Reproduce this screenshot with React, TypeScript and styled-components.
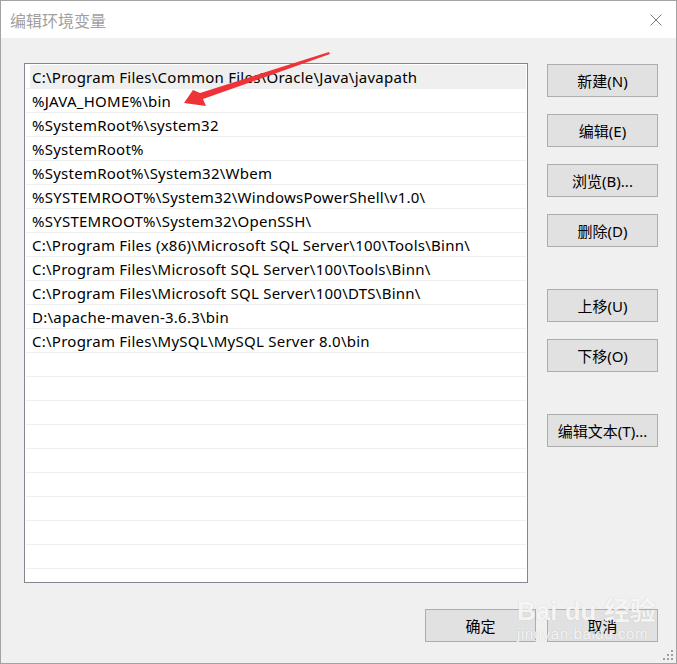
import React from "react";
import styled, { createGlobalStyle } from "styled-components";

const GlobalStyle = createGlobalStyle`
  html, body { margin: 0; padding: 0; background: #ffffff; }
  * { box-sizing: border-box; }
`;

const FONT = `"Noto Sans", "Noto Sans CJK SC", sans-serif`;

const Window = styled.div`
  position: relative;
  width: 677px;
  height: 664px;
  border: 1px solid #a3a3a3;
  display: flex;
  flex-direction: column;
  font-family: ${FONT};
  overflow: hidden;
`;

const TitleBar = styled.div`
  height: 37px;
  background: #ffffff;
  display: flex;
  align-items: center;
  justify-content: space-between;
  padding: 0 14px 0 9px;
`;

const Title = styled.div`
  font-size: 16px;
  color: #a0a0a0;
  line-height: 1;
  padding-top: 2px;
`;

const CloseButton = styled.div`
  width: 12px;
  height: 12px;
  display: flex;
  align-items: center;
  justify-content: center;
`;

const Body = styled.div`
  flex: 1;
  background: #f0f0f0;
  display: flex;
  flex-direction: column;
  padding: 25px 18px 21px 23px;
`;

const Main = styled.div`
  display: flex;
  gap: 19px;
`;

const List = styled.div`
  width: 504px;
  height: 520px;
  background: #ffffff;
  border: 1px solid #828790;
  padding: 1px 0;
  overflow: hidden;
`;

const Row = styled.div`
  height: 24px;
  margin: 0 1px;
  border-bottom: 1px solid #efefef;
  padding-left: 4px;
  display: flex;
`;

const Item = styled.div<{ $selected?: boolean }>`
  flex: 1;
  height: 23px;
  padding-left: 2px;
  display: flex;
  align-items: center;
  font-size: 15px;
  letter-spacing: 0.25px;
  color: #000000;
  white-space: nowrap;
  background: ${(p) => (p.$selected ? "#efefef" : "transparent")};
`;

const ButtonColumn = styled.div`
  display: flex;
  flex-direction: column;
  padding-top: 1px;
`;

const Button = styled.div<{ $gap?: number }>`
  width: 111px;
  height: 33px;
  margin-top: ${(p) => p.$gap ?? 0}px;
  background: #e1e1e1;
  border: 1px solid #adadad;
  display: flex;
  align-items: center;
  justify-content: center;
  font-size: 15px;
  color: #000000;
  font-family: ${FONT};
  white-space: nowrap;
`;

const Footer = styled.div`
  display: flex;
  justify-content: flex-end;
  gap: 11px;
  margin-top: 26px;
`;

const Overlay = styled.svg`
  position: absolute;
  left: 0;
  top: 0;
  pointer-events: none;
`;

const Watermark = styled.div`
  position: absolute;
  left: 516px;
  top: 596px;
  display: flex;
  flex-direction: column;
  align-items: flex-start;
  pointer-events: none;
  color: rgba(255, 255, 255, 0.85);
  text-shadow: 0 0 1px rgba(130, 130, 130, 0.4);
  font-family: "Liberation Sans", "Noto Sans CJK SC", sans-serif;
`;

const WatermarkTop = styled.div`
  font-size: 26px;
  font-weight: bold;
  line-height: 28px;
`;

const WatermarkUrl = styled.div`
  font-size: 15px;
  line-height: 18px;
  letter-spacing: 0.6px;
`;

const Grip = styled.svg`
  position: absolute;
  right: 3px;
  bottom: 3px;
`;

const paths = [
  "C:\\Program Files\\Common Files\\Oracle\\Java\\javapath",
  "%JAVA_HOME%\\bin",
  "%SystemRoot%\\system32",
  "%SystemRoot%",
  "%SystemRoot%\\System32\\Wbem",
  "%SYSTEMROOT%\\System32\\WindowsPowerShell\\v1.0\\",
  "%SYSTEMROOT%\\System32\\OpenSSH\\",
  "C:\\Program Files (x86)\\Microsoft SQL Server\\100\\Tools\\Binn\\",
  "C:\\Program Files\\Microsoft SQL Server\\100\\Tools\\Binn\\",
  "C:\\Program Files\\Microsoft SQL Server\\100\\DTS\\Binn\\",
  "D:\\apache-maven-3.6.3\\bin",
  "C:\\Program Files\\MySQL\\MySQL Server 8.0\\bin",
];

const rows = Array.from({ length: 22 }, (_, i) => paths[i] ?? "");

export default function App() {
  return (
    <>
      <GlobalStyle />
      <Window>
        <TitleBar>
          <Title>编辑环境变量</Title>
          <CloseButton>
            <svg width="12" height="12" viewBox="0 0 12 12">
              <path d="M0.5 0.5 L11.5 11.5 M11.5 0.5 L0.5 11.5" stroke="#777" strokeWidth="1" fill="none" />
            </svg>
          </CloseButton>
        </TitleBar>
        <Body>
          <Main>
            <List>
              {rows.map((text, i) => (
                <Row key={i}>
                  <Item $selected={i === 0}>{text}</Item>
                </Row>
              ))}
            </List>
            <ButtonColumn>
              <Button>新建(N)</Button>
              <Button $gap={17}>编辑(E)</Button>
              <Button $gap={17}>浏览(B)...</Button>
              <Button $gap={17}>删除(D)</Button>
              <Button $gap={42}>上移(U)</Button>
              <Button $gap={17}>下移(O)</Button>
              <Button $gap={42}>编辑文本(T)...</Button>
            </ButtonColumn>
          </Main>
          <Footer>
            <Button>确定</Button>
            <Button>取消</Button>
          </Footer>
        </Body>
        <Watermark>
          <WatermarkTop>Bai du 经验</WatermarkTop>
          <WatermarkUrl>jingyan.baidu.com</WatermarkUrl>
        </Watermark>
        <Grip width="10" height="10" viewBox="0 0 10 10">
          {[
            [8, 0], [8, 4], [4, 4], [8, 8], [4, 8], [0, 8],
          ].map(([x, y], i) => (
            <rect key={i} x={x} y={y} width="2" height="2" fill="#a0a0a0" />
          ))}
        </Grip>
        <Overlay width="677" height="664" viewBox="0 0 677 664">
          <polygon
            points="328,51 199,92 192,89 183,102 205,105 202,98 329,53"
            fill="#ee3338"
          />
        </Overlay>
      </Window>
    </>
  );
}
